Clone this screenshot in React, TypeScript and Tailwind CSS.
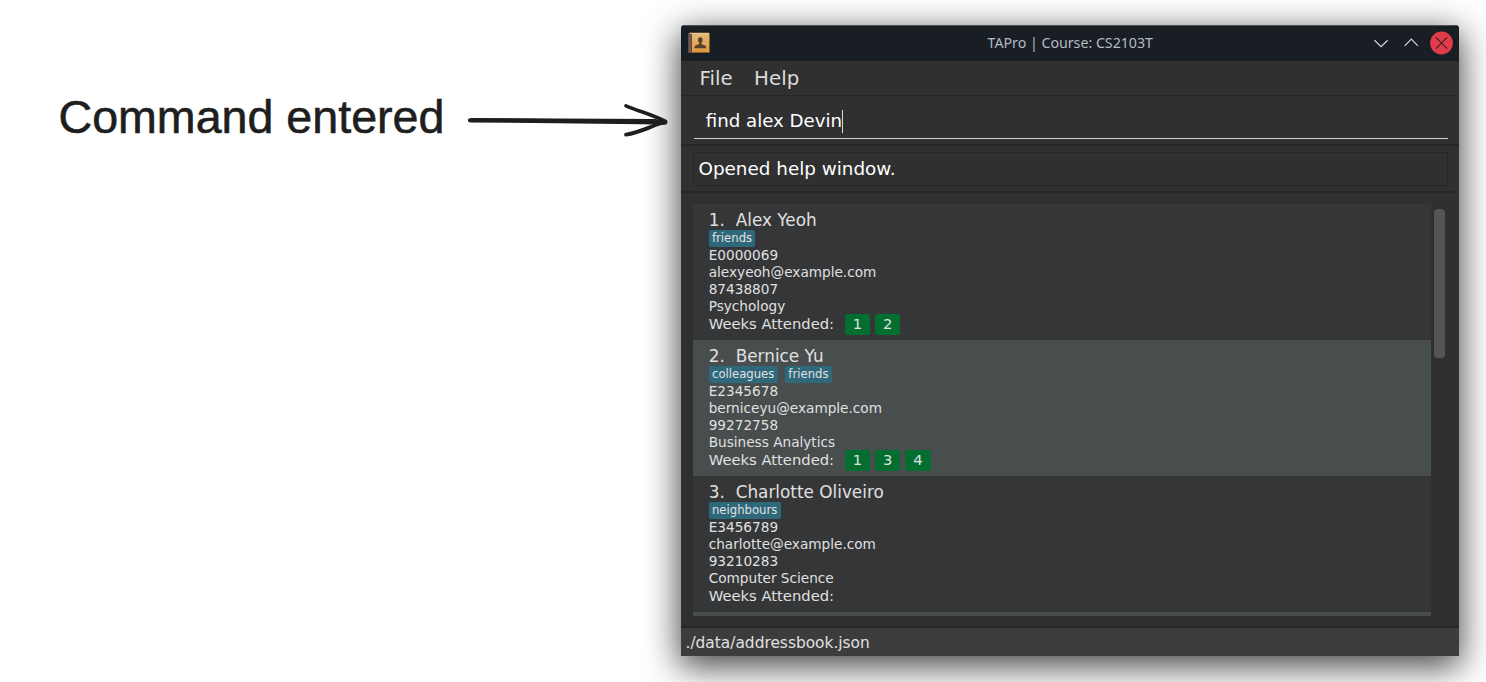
import React from "react";

type Person = {
  id: number;
  name: string;
  tags: string[];
  matric: string;
  email: string;
  phone: string;
  major: string;
  weeks: number[];
};

const people: Person[] = [
  { id: 1, name: "Alex Yeoh", tags: ["friends"], matric: "E0000069", email: "alexyeoh@example.com", phone: "87438807", major: "Psychology", weeks: [1, 2] },
  { id: 2, name: "Bernice Yu", tags: ["colleagues", "friends"], matric: "E2345678", email: "berniceyu@example.com", phone: "99272758", major: "Business Analytics", weeks: [1, 3, 4] },
  { id: 3, name: "Charlotte Oliveiro", tags: ["neighbours"], matric: "E3456789", email: "charlotte@example.com", phone: "93210283", major: "Computer Science", weeks: [] },
];

function BookIcon() {
  return (
    <svg width="22" height="22" viewBox="0 0 22 22">
      <defs>
        <linearGradient id="cover" x1="0" y1="0" x2="0" y2="1">
          <stop offset="0" stopColor="#e6b878" />
          <stop offset="1" stopColor="#dc993f" />
        </linearGradient>
      </defs>
      <rect x="0.3" y="0.8" width="21.4" height="20" rx="1" fill="#b5782f" />
      <rect x="0.3" y="0.8" width="4" height="20" rx="1" fill="#5a4744" />
      <rect x="1.6" y="1" width="1" height="19.4" fill="#86706a" />
      <rect x="4" y="1.6" width="17" height="18.4" fill="url(#cover)" />
      <rect x="2" y="0.9" width="19" height="0.9" fill="#f2d3a4" />
      <path d="M12.3 5.3c-1.6 0-2.400 1.100-2.300 2.600.1 1.300.6 2.200 1.200 2.800v1.400c-.7.800-4.500.8-4.500 3v1.100h11.300v-1.100c0-2.200-3.900-2.200-4.600-3v-1.400c.6-.6 1.100-1.500 1.200-2.800.1-1.500-.7-2.600-2.300-2.600z" fill="#58402b" />
    </svg>
  );
}

function TitleBar() {
  return (
    <header className="grid h-9 shrink-0 grid-cols-[1fr_auto_1fr] items-center border-t border-t-[#4a5252] bg-[#191e25] pr-[6.500px] pb-px pl-[7px]">
      <BookIcon />
      <h1 className="font-['Noto_Sans'] text-[14.200px] text-[#b4bac3]">TAPro | Course: CS2103T</h1>
      <div className="flex items-center justify-end">
        <svg width="84" height="24" viewBox="0 0 84 24" fill="none">
          <path d="M5.500 9.300l6.600 6.300 6.600-6.300" stroke="#d3d6da" strokeWidth="1.200" />
          <path d="M35.700 14.800l6.600-6.600 6.600 6.600" stroke="#d3d6da" strokeWidth="1.200" />
          <circle cx="72.500" cy="12" r="11.400" fill="#e23b4b" />
          <path d="M66.900 6.400l11.200 11.200M78.100 6.400l-11.200 11.200" stroke="#412029" strokeWidth="1.200" />
        </svg>
      </div>
    </header>
  );
}

function PersonCard({ person }: { person: Person }) {
  return (
    <li className="h-[136px] shrink-0 pt-[5.500px] pl-[15.700px] text-[13.650px] leading-[16.850px] odd:bg-[#353638] even:bg-[#484d4e]">
      <div className="flex h-[20.500px] items-center pt-px text-[16.850px]">
        <span className="w-[27px]">{person.id}.</span>
        <span>{person.name}</span>
      </div>
      <div className="flex h-[17px] gap-[7.500px]">
        {person.tags.map((tag) => (
          <span key={tag} className="flex h-[17px] items-center rounded-xs bg-[#2f687b] px-[3.300px] text-[11.650px]">
            {tag}
          </span>
        ))}
      </div>
      <p>{person.matric}</p>
      <p>{person.email}</p>
      <p>{person.phone}</p>
      <p>{person.major}</p>
      <div className="flex h-[21px] items-center text-[14.750px]">
        <span className="w-[136px]">Weeks Attended:</span>
        <div className="flex gap-[5px]">
          {person.weeks.map((week) => (
            <span key={week} className="flex h-[21px] w-[25.300px] items-center justify-center rounded-xs bg-[#026e2f]">
              {week}
            </span>
          ))}
        </div>
      </div>
    </li>
  );
}

function AppWindow() {
  return (
    <main className="flex h-[631px] w-[778px] flex-col overflow-hidden rounded-t-[4px] bg-[#303030] font-['DejaVu_Sans'] text-[#e0e0e0] shadow-[0_9px_34px_2px_rgba(0,0,0,0.72)]">
      <TitleBar />
      <nav className="flex h-[35px] shrink-0 items-center gap-[21.500px] border-b border-[#262626] pt-0.5 pl-[18.500px] text-[19.800px] text-[#dadada]">
        <span>File</span>
        <span>Help</span>
      </nav>
      <section className="h-[50px] shrink-0 border-b-2 border-[#272727] pr-[11px] pl-[12.700px]">
        <div className="flex h-[43px] items-center border-b border-[#cfcfcf] pt-2 pl-3 text-[18.200px] text-white">
          <span>find alex Devin</span>
          <span className="h-[23px] w-px bg-[#d8d8d8]" />
        </div>
      </section>
      <section className="h-[47px] shrink-0 border-b-2 border-[#272727] px-[11.500px] pt-1.5">
        <div className="flex h-[34px] items-center border border-[#272727] pl-[5px] text-[18.350px] text-white">Opened help window.</div>
      </section>
      <section className="flex grow px-3 pt-[11px]">
        <ul className="flex h-[412px] w-[738px] flex-col overflow-hidden">
          {people.map((person) => (
            <PersonCard key={person.id} person={person} />
          ))}
          <li className="h-5 shrink-0 bg-[#484d4e]" />
        </ul>
        <div className="mt-[5px] ml-[3px] h-[149px] w-[11px] rounded-[4px] bg-[#555555]" />
      </section>
      <footer className="flex h-[30px] shrink-0 items-center border-t-2 border-[#272727] bg-[#3c3c3c] pt-1 pl-[4.500px] text-[15.400px]">
        ./data/addressbook.json
      </footer>
    </main>
  );
}

export default function App() {
  return (
    <div className="flex h-[682px] w-[1486px] overflow-hidden bg-white">
      <div className="flex w-[681px] shrink-0 pt-[88px] pl-[58.500px]">
        <p className="w-[408.500px] font-['Liberation_Sans'] text-[46.600px] leading-[58px] whitespace-nowrap text-[#1e1e1e] [-webkit-text-stroke:0.6px_#1e1e1e]">
          Command entered
        </p>
        <svg className="relative z-10 shrink-0" width="206" height="60" viewBox="467 88 206 60" fill="none" stroke="#1e1e1e" strokeLinecap="round">
          <path d="M470 120.300C530 120.600 610 121.700 664 122.300" strokeWidth="4.200" />
          <path d="M472 119.800L655 120.700" strokeWidth="3.600" />
          <path d="M626 105.800C638 111 653 115 665 121.200" strokeWidth="3.600" />
          <path d="M626 134.700C640 132.500 650 126.500 664 122.300" strokeWidth="3.800" />
          <path d="M645 121.600L665 122.200" strokeWidth="5" />
        </svg>
      </div>
      <div className="pt-[25px]">
        <AppWindow />
      </div>
    </div>
  );
}
